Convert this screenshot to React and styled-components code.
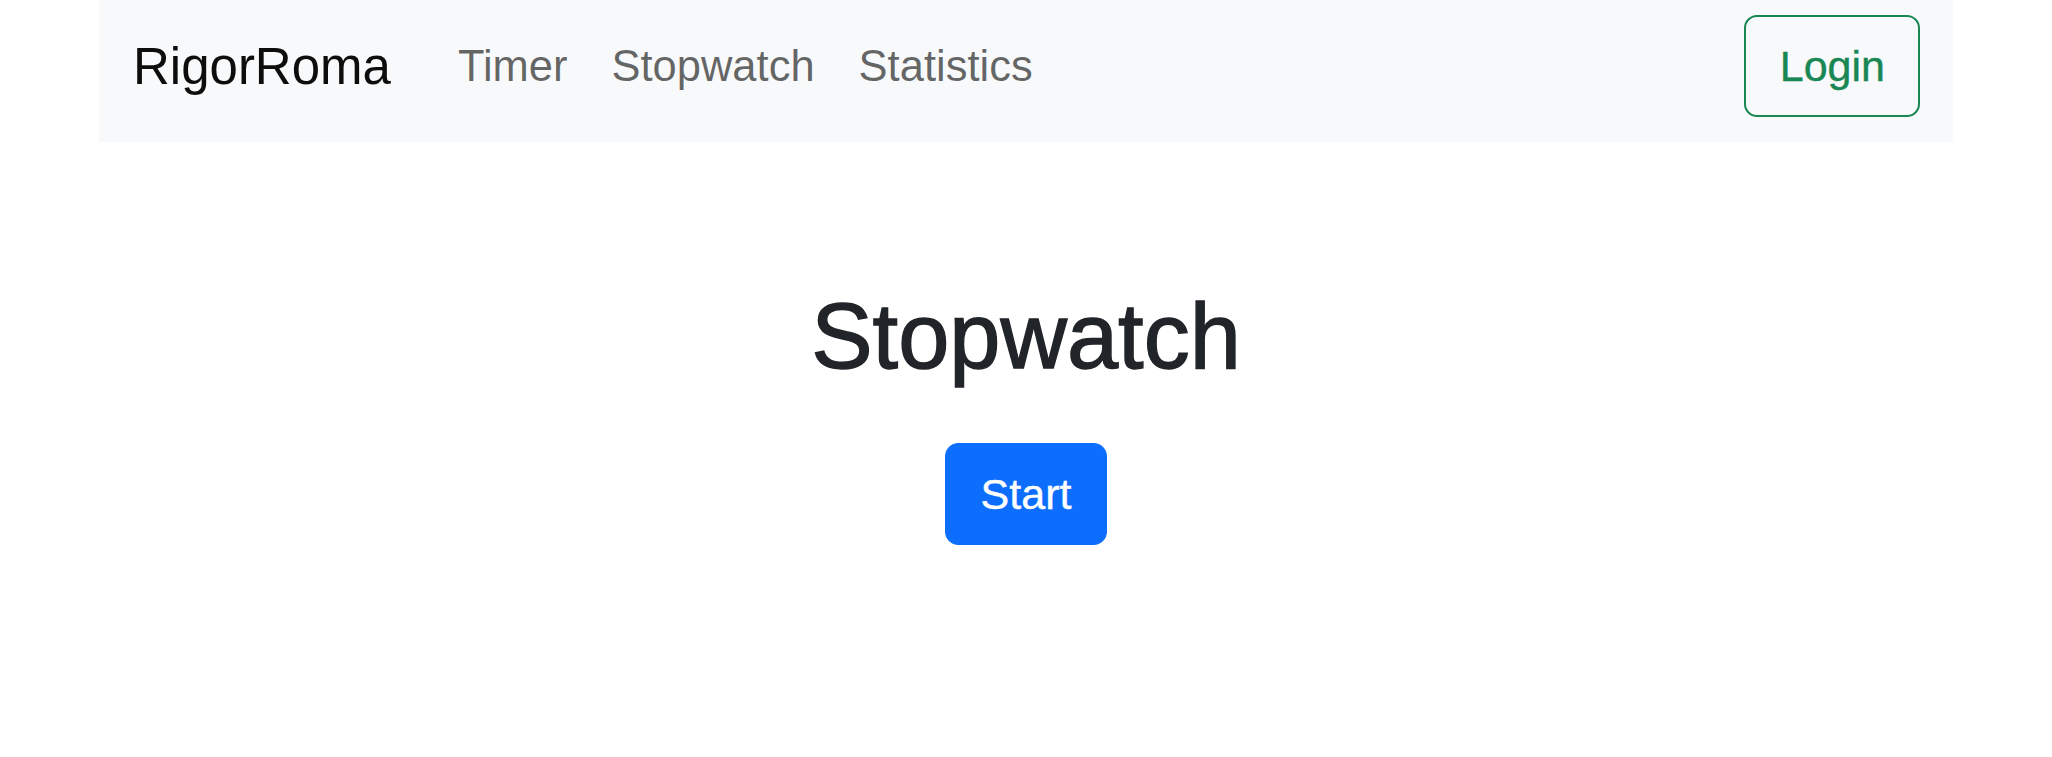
import styled, { createGlobalStyle } from 'styled-components';

const GlobalStyle = createGlobalStyle`
	body {
		margin: 0;
		background: #fff;
		font-family: "Liberation Sans", Arial, sans-serif;
		color: #212529;
	}
`;

const NavBar = styled.nav`
	display: flex;
	align-items: center;
	max-width: 1854px;
	height: 142px;
	margin: 0 auto;
	padding: 0 33px 10px 34px;
	box-sizing: border-box;
	background: #f8f9fa;
`;

const Brand = styled.a`
	font-size: 51px;
	color: rgba(0, 0, 0, 0.95);
	text-decoration: none;
	margin-right: 45px;
`;

const NavLinks = styled.div`
	display: flex;
	align-items: center;
`;

const NavLink = styled.a`
	font-size: 43.5px;
	padding: 0 22px;
	color: rgba(0, 0, 0, 0.6);
	text-decoration: none;
`;

const Button = styled.button`
	font-family: inherit;
	font-size: 43px;
	line-height: 64px;
	padding: 18px 35px;
	border-radius: 13px;
	cursor: pointer;
	border: 1px solid ${({ $variant }) => ($variant === 'outline' ? '#198754' : '#0d6efd')};
	background: ${({ $variant }) => ($variant === 'outline' ? 'transparent' : '#0d6efd')};
	color: ${({ $variant }) => ($variant === 'outline' ? '#198754' : '#fff')};
	-webkit-text-stroke: 0.4px currentColor;
`;

const LoginButton = styled(Button)`
	margin-left: auto;
	border-width: 2px;
	padding: 17px 33px 17px 34px;
`;

const Main = styled.main`
	display: flex;
	flex-direction: column;
	align-items: center;
`;

const Title = styled.h1`
	font-size: 92px;
	font-weight: 400;
	line-height: 1.2;
	margin: 139px 0 52px;
	color: #212529;
	-webkit-text-stroke: 1.4px currentColor;
`;

export default function App() {
	return (
		<>
			<GlobalStyle />
			<NavBar>
				<Brand href="#">RigorRoma</Brand>
				<NavLinks>
					<NavLink href="#">Timer</NavLink>
					<NavLink href="#">Stopwatch</NavLink>
					<NavLink href="#">Statistics</NavLink>
				</NavLinks>
				<LoginButton $variant="outline">Login</LoginButton>
			</NavBar>
			<Main>
				<Title>Stopwatch</Title>
				<Button>Start</Button>
			</Main>
		</>
	);
}
